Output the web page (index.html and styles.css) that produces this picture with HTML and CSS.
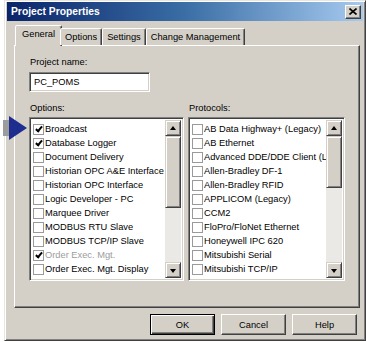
FILE: index.html
```html
<!DOCTYPE html>
<html lang="en">
<head>
    <meta charset="UTF-8">
    <title>Project Properties</title>
    <link rel="stylesheet" href="styles.css">
</head>
<body>

<div class="dialog">
    <div class="titlebar">
        <span class="title">Project Properties</span>
        <button class="close">
            <svg width="8" height="7" viewBox="0 0 8 7"><path d="M0.5 0.5 L7.5 6.5 M7.5 0.5 L0.5 6.5" stroke="#000" stroke-width="1.6"/></svg>
        </button>
    </div>

    <div class="tabs">
        <span class="tab active">General</span>
        <span class="tab">Options</span>
        <span class="tab">Settings</span>
        <span class="tab">Change Management</span>
    </div>

    <div class="panel">
        <span class="label">Project name:</span>
        <div class="textbox">PC_POMS</div>

        <div class="lists">
            <div class="group">
                <span class="label">Options:</span>
                <div class="listbox">
                    <ul class="items">
                        <li><span class="check on"></span>Broadcast</li>
                        <li><span class="check on"></span>Database Logger</li>
                        <li><span class="check"></span>Document Delivery</li>
                        <li><span class="check"></span>Historian OPC A&amp;E Interface</li>
                        <li><span class="check"></span>Historian OPC Interface</li>
                        <li><span class="check"></span>Logic Developer - PC</li>
                        <li><span class="check"></span>Marquee Driver</li>
                        <li><span class="check"></span>MODBUS RTU Slave</li>
                        <li><span class="check"></span>MODBUS TCP/IP Slave</li>
                        <li class="disabled"><span class="check on"></span>Order Exec. Mgt.</li>
                        <li><span class="check"></span>Order Exec. Mgt. Display</li>
                    </ul>
                    <div class="scrollbar">
                        <span class="arrow up"></span>
                        <span class="thumb thumb-options"></span>
                        <span class="track"></span>
                        <span class="arrow down"></span>
                    </div>
                </div>
            </div>
            <div class="group">
                <span class="label">Protocols:</span>
                <div class="listbox">
                    <ul class="items">
                        <li><span class="check"></span>AB Data Highway+ (Legacy)</li>
                        <li><span class="check"></span>AB Ethernet</li>
                        <li><span class="check"></span>Advanced DDE/DDE Client (Legacy)</li>
                        <li><span class="check"></span>Allen-Bradley DF-1</li>
                        <li><span class="check"></span>Allen-Bradley RFID</li>
                        <li><span class="check"></span>APPLICOM (Legacy)</li>
                        <li><span class="check"></span>CCM2</li>
                        <li><span class="check"></span>FloPro/FloNet Ethernet</li>
                        <li><span class="check"></span>Honeywell IPC 620</li>
                        <li><span class="check"></span>Mitsubishi Serial</li>
                        <li><span class="check"></span>Mitsubishi TCP/IP</li>
                    </ul>
                    <div class="scrollbar">
                        <span class="arrow up"></span>
                        <span class="thumb thumb-protocols"></span>
                        <span class="track"></span>
                        <span class="arrow down"></span>
                    </div>
                </div>
            </div>
        </div>
    </div>

    <div class="buttons">
        <button class="btn default">OK</button>
        <button class="btn">Cancel</button>
        <button class="btn">Help</button>
    </div>
</div>

<svg class="pointer" width="26" height="26" viewBox="0 0 26 26">
    <rect x="0" y="4" width="7" height="16" fill="#9c9c9c"/>
    <polygon points="6,0 24,12 6,24" fill="#1e2d8e"/>
</svg>

</body>
</html>
```

FILE: styles.css
```css
body {
    margin: 0;
    background-color: #fff;
    font-family: "Liberation Sans", Arial, sans-serif;
    font-size: 9.3px;
    color: #000;
}

.dialog {
    margin-left: 4px;
    width: 362px;
    height: 341px;
    box-sizing: border-box;
    background-color: #d4d0c8;
    border: 1px solid;
    border-color: #e8e6e0 #404040 #404040 #e8e6e0;
    box-shadow: inset 1px 1px #fff, inset -1px -1px #808080;
    padding: 1px 2px;
}

.titlebar {
    height: 19px;
    background: linear-gradient(to right, #0a246a 0%, #3a6ea5 50%, #a6caf0 100%);
    display: flex;
    align-items: center;
    justify-content: space-between;
    padding: 0 2px 0 4px;
}

.title {
    color: #fff;
    font-weight: bold;
    font-size: 10.3px;
}

.close {
    width: 16px;
    height: 14px;
    padding: 0;
    background-color: #d4d0c8;
    border: 1px solid;
    border-color: #fff #404040 #404040 #fff;
    box-shadow: inset -1px -1px #808080;
    display: flex;
    align-items: center;
    justify-content: center;
}

.tabs {
    display: flex;
    align-items: flex-end;
    height: 20px;
    margin-top: 4px;
    padding-left: 10px;
    position: relative;
    z-index: 1;
}

.tab {
    height: 17px;
    box-sizing: border-box;
    padding: 3px 4px 0 4px;
    border: 1px solid;
    border-bottom: none;
    border-color: #fff #404040 transparent #fff;
    box-shadow: inset -1px 0 #808080;
    border-radius: 2px 2px 0 0;
    white-space: nowrap;
    background-color: #d4d0c8;
}

.tab.active {
    height: 21px;
    margin: 0 -2px -1px -2px;
    padding: 3px 6px 0 6px;
}

.panel {
    margin-left: 7px;
    width: 346px;
    height: 263px;
    box-sizing: border-box;
    border: 1px solid;
    border-color: #fff #404040 #404040 #fff;
    box-shadow: inset -1px -1px #808080;
    padding: 9px 14px 0 14px;
}

.label {
    display: block;
    line-height: 14px;
    padding-left: 1px;
}

.textbox {
    margin-top: 3px;
    width: 121px;
    height: 20px;
    box-sizing: border-box;
    background-color: #fff;
    border: 1px solid;
    border-color: #808080 #fff #fff #808080;
    box-shadow: inset 1px 1px #404040, inset -1px -1px #d4d0c8;
    padding: 4px 0 0 4px;
    line-height: 11px;
}

.lists {
    display: flex;
    gap: 4px;
    margin-top: 9px;
}

.group {
    width: 157px;
}

.listbox {
    margin-top: 2px;
    height: 164px;
    box-sizing: border-box;
    background-color: #fff;
    border: 1px solid;
    border-color: #808080 #fff #fff #808080;
    box-shadow: inset 1px 1px #404040, inset -1px -1px #d4d0c8;
    padding: 2px;
    display: flex;
}

.items {
    list-style: none;
    margin: 2px 0 0 0;
    padding: 0;
    flex: 1;
    overflow: hidden;
}

.items li {
    display: flex;
    align-items: center;
    height: 14px;
    white-space: nowrap;
    padding-left: 1px;
}

.items li.disabled {
    color: #9c9c9c;
}

.check {
    flex: none;
    width: 11px;
    height: 11px;
    box-sizing: border-box;
    border: 1px solid #9a9a9a;
    background-color: #fff;
    margin-right: 1px;
    position: relative;
}

.check.on::after {
    content: "";
    position: absolute;
    left: 3px;
    top: 0;
    width: 2px;
    height: 5px;
    border: solid #000;
    border-width: 0 2px 2px 0;
    transform: rotate(40deg);
}

.scrollbar {
    flex: none;
    width: 16px;
    display: flex;
    flex-direction: column;
}

.arrow {
    height: 16px;
    box-sizing: border-box;
    background-color: #d4d0c8;
    border: 1px solid;
    border-color: #d4d0c8 #404040 #404040 #d4d0c8;
    box-shadow: inset 1px 1px #fff, inset -1px -1px #808080;
    position: relative;
}

.arrow::after {
    content: "";
    position: absolute;
    left: 4px;
    width: 0;
    height: 0;
    border-left: 3.5px solid transparent;
    border-right: 3.5px solid transparent;
}

.arrow.up::after {
    top: 5px;
    border-bottom: 4px solid #000;
}

.arrow.down::after {
    top: 6px;
    border-top: 4px solid #000;
}

.thumb {
    box-sizing: border-box;
    background-color: #d4d0c8;
    border: 1px solid;
    border-color: #d4d0c8 #404040 #404040 #d4d0c8;
    box-shadow: inset 1px 1px #fff, inset -1px -1px #808080;
}

.thumb-options {
    height: 72px;
}

.thumb-protocols {
    height: 52px;
}

.track {
    flex: 1;
    background-color: #ebe9e5;
}

.buttons {
    display: flex;
    justify-content: flex-end;
    gap: 6px;
    margin-top: 6px;
    padding-right: 6px;
}

.btn {
    width: 65px;
    height: 21px;
    box-sizing: border-box;
    font-family: inherit;
    font-size: 9.3px;
    color: #000;
    background-color: #d4d0c8;
    border: 1px solid;
    border-color: #fff #404040 #404040 #fff;
    box-shadow: inset -1px -1px #808080;
    padding: 0;
}

.btn.default {
    border: 1px solid #000;
    box-shadow: inset 1px 1px #fff, inset -1px -1px #404040, inset -2px -2px #808080;
}

.pointer {
    position: absolute;
    left: 3px;
    top: 116px;
}
```
